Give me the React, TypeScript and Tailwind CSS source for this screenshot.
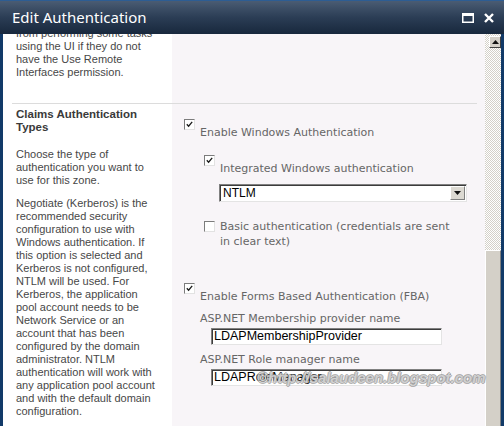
import React from 'react';

const leftLines1 = ['from performing some tasks', 'using the UI if they do not', 'have the Use Remote', 'Interfaces permission.'];

const chooseLines = ['Choose the type of', 'authentication you want to', 'use for this zone.'];

const negotiateLines = [
    'Negotiate (Kerberos) is the',
    'recommended security',
    'configuration to use with',
    'Windows authentication. If',
    'this option is selected and',
    'Kerberos is not configured,',
    'NTLM will be used. For',
    'Kerberos, the application',
    'pool account needs to be',
    'Network Service or an',
    'account that has been',
    'configured by the domain',
    'administrator. NTLM',
    'authentication will work with',
    'any application pool account',
    'and with the default domain',
    'configuration.',
];

function Check({ checked }: { checked?: boolean }) {
    return (
        <span className="relative block h-[11px] w-[11px] shrink-0 border border-t-[#7c7c7c] border-l-[#7c7c7c] border-r-[#e2e2e2] border-b-[#e2e2e2] bg-white">
            {checked && (
                <svg viewBox="0 0 9 9" className="absolute left-0 top-0 h-[9px] w-[9px]">
                    <path d="M1.8 4.2 L3.6 6.2 L7.2 1.8" stroke="#1a1a1a" strokeWidth="1.3" fill="none" />
                </svg>
            )}
        </span>
    );
}

function CheckRow({ checked, label }: { checked?: boolean; label: string }) {
    return (
        <div className="flex items-start">
            <Check checked={checked} />
            <span className="ml-[5px] mt-[6px] leading-[16px]">{label}</span>
        </div>
    );
}

function TextBox({ value }: { value: string }) {
    return (
        <div className="ml-[11px] mt-[1px] flex h-[17px] w-[231px] items-center border border-t-[#808080] border-l-[#808080] border-r-[#e4e4e4] border-b-[#e4e4e4] bg-white pl-[2px] font-['Liberation_Sans',Arial,sans-serif] text-[12.5px] text-black shadow-[inset_1px_1px_0_#3c3c3c]">
            {value}
        </div>
    );
}

export default function App() {
    return (
        <div className="relative flex h-[426px] w-[504px] flex-col overflow-hidden bg-[#123a68]">
            {/* title bar */}
            <div className="flex h-[34px] shrink-0 items-center border-t border-t-[#2d5d93] bg-gradient-to-b from-[#4a5c73] via-[#2b3d55] to-[#18283d] pl-[12px] pr-[10px]">
                <span className="flex-1 font-['Noto_Sans',sans-serif] text-[15px] leading-none text-white">Edit Authentication</span>
                <svg viewBox="0 0 12 10" className="mr-[10px] h-[10px] w-[12px]">
                    <rect x="0.75" y="0.75" width="10.5" height="8.5" fill="none" stroke="white" strokeWidth="1.5" />
                    <rect x="0.5" y="0.5" width="11" height="2.5" fill="white" />
                </svg>
                <svg viewBox="0 0 10 10" className="h-[10px] w-[10px]">
                    <path d="M1 1 L9 9 M9 1 L1 9" stroke="white" strokeWidth="2.4" />
                </svg>
            </div>

            {/* body */}
            <div className="flex min-h-0 flex-1 overflow-hidden px-[3px]">
                <div className="flex min-w-0 flex-1 flex-col overflow-hidden">
                    {/* row 1 */}
                    <div className="flex h-[69px] shrink-0 overflow-hidden">
                        <div className="w-[169px] shrink-0 bg-white pl-[13px] font-['Liberation_Sans',Arial,sans-serif] text-[11px] leading-[13px] text-[#474747]">
                            <div className="-mt-[7px]">
                                {leftLines1.map((l) => (
                                    <div key={l}>{l}</div>
                                ))}
                            </div>
                        </div>
                        <div className="flex-1 bg-[#f8f5f8]" />
                    </div>

                    {/* row 2 */}
                    <div className="flex flex-1">
                        <div className="w-[169px] shrink-0 bg-white pl-[9px]">
                            <div className="h-full border-t border-[#dcdcdc] pl-[4px] pt-[4px] font-['Liberation_Sans',Arial,sans-serif] text-[11px] leading-[13px] text-[#474747]">
                                <div className="text-[11.5px] font-bold text-[#3a3a3a]">
                                    <div>Claims Authentication</div>
                                    <div>Types</div>
                                </div>
                                <div className="mt-[14px]">
                                    {chooseLines.map((l) => (
                                        <div key={l}>{l}</div>
                                    ))}
                                </div>
                                <div className="mt-[10px]">
                                    {negotiateLines.map((l) => (
                                        <div key={l}>{l}</div>
                                    ))}
                                </div>
                            </div>
                        </div>
                        <div className="flex-1 bg-[#f8f5f8] pr-[8px]">
                            <div className="h-full border-t border-[#dcdcdc] pl-[12px] pt-[15px] font-['DejaVu_Sans',Verdana,sans-serif] text-[11px] text-[#666]">
                                <CheckRow checked label="Enable Windows Authentication" />
                                <div className="mt-[14px] pl-[20px]">
                                    <CheckRow checked label="Integrated Windows authentication" />
                                    <div className="ml-[15px] mt-[7px] flex h-[18px] w-[248px] items-center border border-t-[#808080] border-l-[#808080] border-r-[#e4e4e4] border-b-[#e4e4e4] bg-white shadow-[inset_1px_1px_0_#3c3c3c]">
                                        <span className="flex-1 pl-[3px] font-['Liberation_Sans',Arial,sans-serif] text-[12px] text-black">NTLM</span>
                                        <span className="mr-[1px] flex h-[14px] w-[15px] items-center justify-center border border-t-white border-l-white border-r-[#808080] border-b-[#808080] bg-[#dcd9d2]">
                                            <svg viewBox="0 0 7 4" className="h-[4px] w-[7px]">
                                                <path d="M0 0 H7 L3.5 4 Z" fill="#111" />
                                            </svg>
                                        </span>
                                    </div>
                                    <div className="mt-[19px] flex items-start">
                                        <Check />
                                        <span className="-mt-[2px] ml-[5px] leading-[15px]">
                                            Basic authentication (credentials are sent
                                            <br />
                                            in clear text)
                                        </span>
                                    </div>
                                </div>
                                <div className="mt-[34px]">
                                    <CheckRow checked label="Enable Forms Based Authentication (FBA)" />
                                    <div className="pl-[16px]">
                                        <div className="mt-[6px] leading-[16px]">ASP.NET Membership provider name</div>
                                        <TextBox value="LDAPMembershipProvider" />
                                        <div className="mt-[7px] leading-[16px]">ASP.NET Role manager name</div>
                                        <TextBox value="LDAPRoleManager" />
                                    </div>
                                </div>
                            </div>
                        </div>
                    </div>
                </div>

                {/* scrollbar */}
                <div className="flex w-[16px] shrink-0 flex-col bg-[repeating-conic-gradient(#d4d0c8_0_25%,#ffffff_0_50%)] bg-[length:2px_2px]">
                    <div className="ml-auto mr-0 mt-[2px] flex h-[12px] w-[12px] items-center justify-center border border-t-white border-l-white border-r-[#404040] border-b-[#404040] bg-[#d4d0c8]">
                        <svg viewBox="0 0 7 4" className="h-[4px] w-[7px]">
                            <path d="M0 4 H7 L3.5 0 Z" fill="#111" />
                        </svg>
                    </div>
                    <div className="mt-[202px] flex-1 border-l border-t border-l-white border-t-white border-r border-r-[#808080] bg-[#d4d0c8]" />
                </div>
            </div>

            {/* watermark */}
            <div className="pointer-events-none absolute left-[257px] top-[369px] font-['Liberation_Sans',Arial,sans-serif] text-[15px] font-bold italic leading-[18px] text-white/60 [text-shadow:1px_0_rgba(130,130,130,0.6),-1px_0_rgba(130,130,130,0.6),0_1px_rgba(130,130,130,0.6),0_-1px_rgba(130,130,130,0.6)]">
                ©http://salaudeen.blogspot.com
            </div>
        </div>
    );
}
